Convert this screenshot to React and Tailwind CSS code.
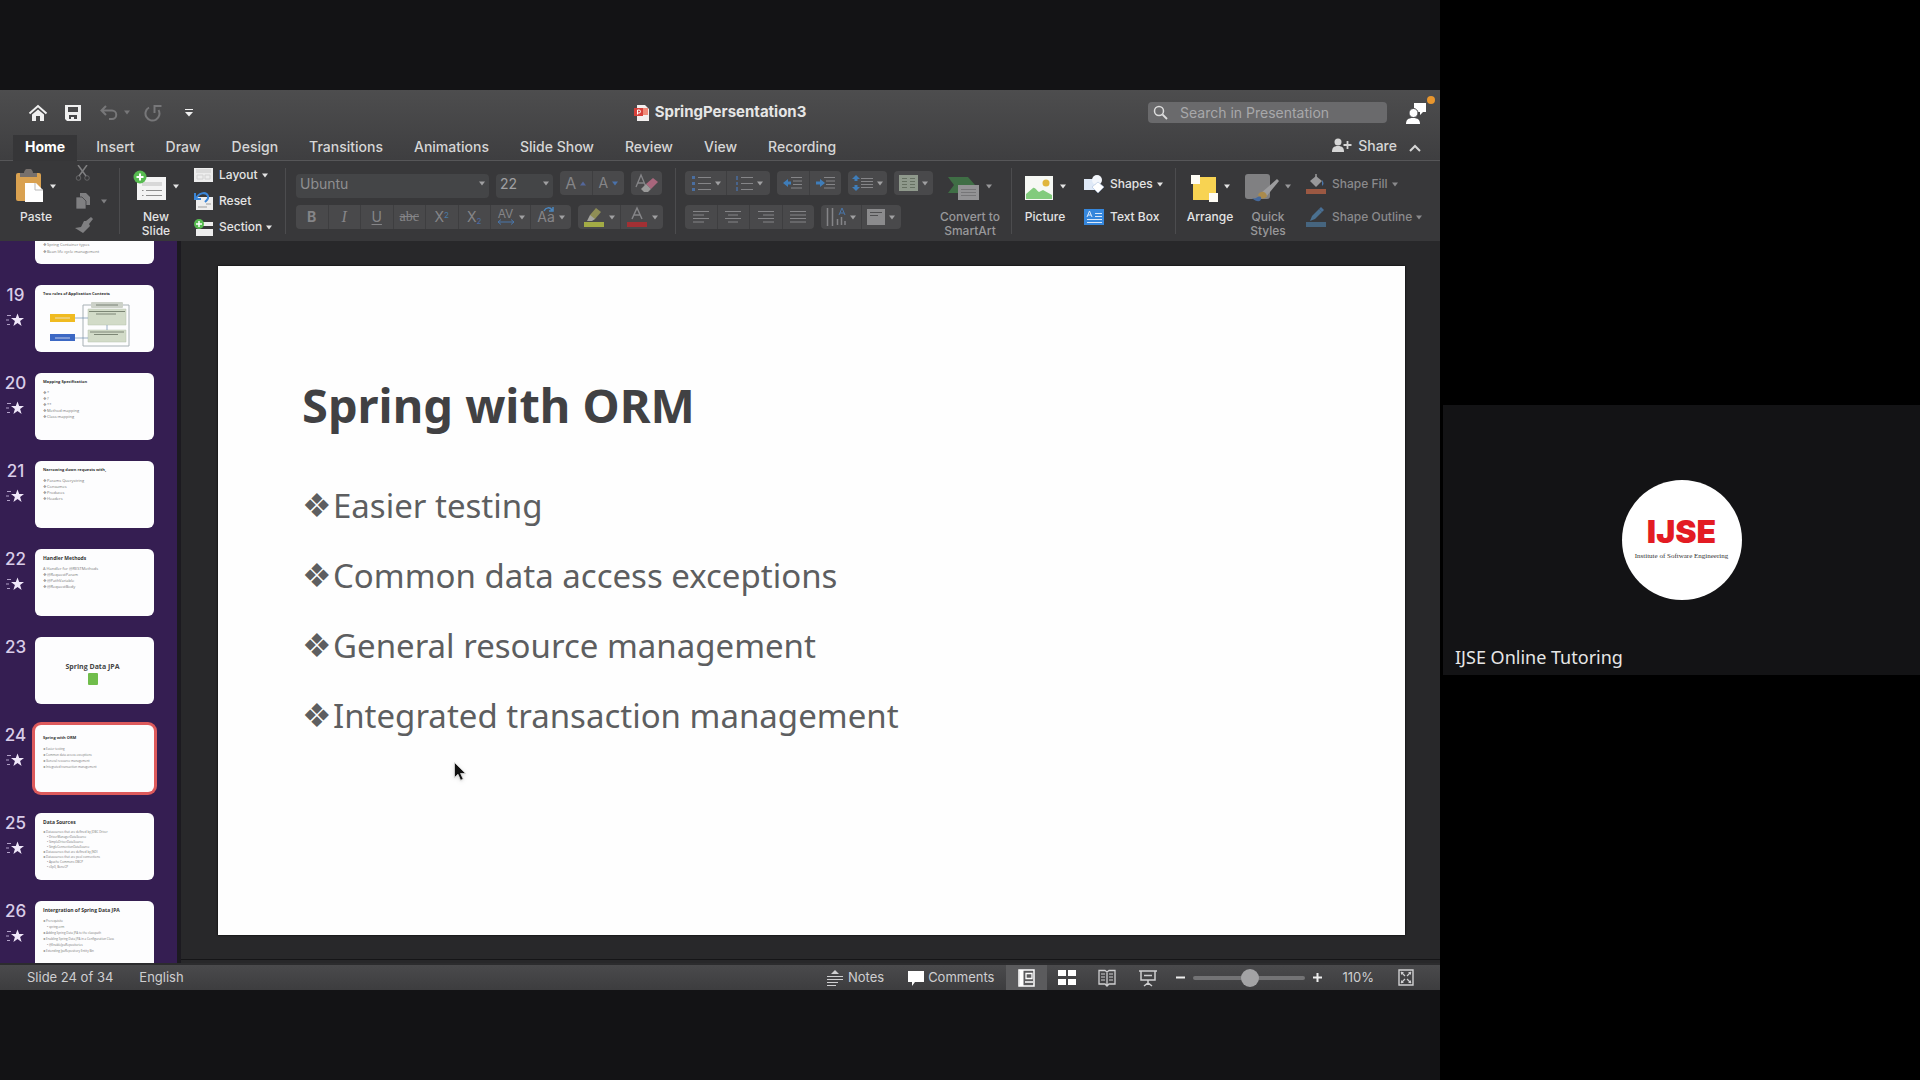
import React from "react";

const UI = "font-['Inter',sans-serif]";

function Caret({ className = "" }) {
  return (
    <svg viewBox="0 0 6 5" className={`h-[5px] w-1.5 shrink-0 ${className}`} fill="currentColor" aria-hidden="true">
      <path d="M0 .5h6L3 4.5z" />
    </svg>
  );
}

function Svg({ w, h, className = "", children }) {
  return (
    <svg width={w} height={h} viewBox={`0 0 ${w} ${h}`} className={`shrink-0 ${className}`} fill="none" aria-hidden="true">
      {children}
    </svg>
  );
}

/* ---------- title bar ---------- */

function TitleBar() {
  return (
    <header className="grid h-[45px] shrink-0 grid-cols-[1fr_auto_1fr] items-center">
      <div className="flex items-center pl-7 text-[#f0f0f0]">
        <button aria-label="Home" className="w-5">
          <Svg w={20} h={18}>
            <path d="M1.5 9.5 10 2l8.500 7.500" stroke="currentColor" strokeWidth="2" />
            <path d="M4 10.500 10 5.500l6 5V17h-4v-5H8v5H4z" fill="currentColor" />
          </Svg>
        </button>
        <button aria-label="Save" className="ml-4">
          <Svg w={18} h={18}>
            <path fillRule="evenodd" d="M1 1h16v16H3l-2-2zM4 3v5h10V3zM5 11v4h2v-2h3v2h3v-4z" fill="currentColor" />
          </Svg>
        </button>
        <button aria-label="Undo" className="ml-[18px] flex items-center gap-1.5 text-[#777779]">
          <Svg w={18} h={16}>
            <path d="M6 1 1.500 5.500 6 10M2 5.500h10a4.200 4.200 0 0 1 0 8.500H9" stroke="currentColor" strokeWidth="2" />
          </Svg>
          <Caret />
        </button>
        <button aria-label="Redo" className="ml-[14px] text-[#777779]">
          <Svg w={18} h={18}>
            <path d="M5 3.500A7 7 0 1 0 14.500 6M10.500 9V2h7" stroke="currentColor" strokeWidth="2" />
          </Svg>
        </button>
        <button aria-label="Customize toolbar" className="ml-[23px]">
          <Svg w={8} h={8}>
            <path d="M0 .5h8" stroke="currentColor" />
            <path d="M0 3h8L4 7.500z" fill="currentColor" />
          </Svg>
        </button>
      </div>
      <h1 className="flex items-center gap-[5px] text-[15px] font-bold text-[#e6e6e6]">
        <Svg w={16} h={18}>
          <path d="M3 1h8l4 4v12H3z" fill="#f3efee" />
          <path d="M9 4h5v7H9z" fill="#ef8a78" />
          <path d="M0 4h9v8H0z" fill="#d6403a" />
          <path d="M3.500 10.500V6H5a1.500 1.500 0 0 1 0 3H3.500" stroke="#fff" />
        </Svg>
        SpringPersentation3
      </h1>
      <div className="relative flex items-center justify-end pr-[13px]">
        <label className="flex h-[21px] w-[239px] items-center gap-3 rounded-sm bg-[#6a6a6c] pl-[5px] text-[#dcdcdc]">
          <Svg w={15} h={15}>
            <circle cx="6" cy="6" r="4.500" stroke="currentColor" strokeWidth="1.500" />
            <path d="m9.500 9.500 4.500 4.500" stroke="currentColor" strokeWidth="1.800" />
          </Svg>
          <input
            aria-label="Search in Presentation"
            placeholder="Search in Presentation"
            className="w-full min-w-0 bg-transparent text-sm outline-none placeholder:text-[#a8a8aa]"
          />
        </label>
        <button aria-label="Account and feedback" className="ml-[19px] text-white">
          <Svg w={21} h={22}>
            <path d="M8 1h12v9h-3l-3 3v-3H8z" fill="currentColor" />
            <circle cx="7.500" cy="11" r="4.500" fill="currentColor" stroke="#454547" />
            <path d="M0 22c0-4 2-6 7-6s7 2 7 6z" fill="currentColor" />
          </Svg>
        </button>
        <span className="absolute right-[5px] top-[-6px] size-2 rounded-full bg-[#e8962e]" />
      </div>
    </header>
  );
}

/* ---------- tabs ---------- */

const TABS = ["Home", "Insert", "Draw", "Design", "Transitions", "Animations", "Slide Show", "Review", "View", "Recording"];

function Tabs() {
  return (
    <nav className="flex h-[26px] shrink-0 items-stretch border-b border-[#565658] pl-[13px] text-sm text-[#d6d6d6]">
      {TABS.map((t, i) => (
        <button
          key={t}
          className={i === 0 ? "mr-[7px] -mb-px bg-[#363638] px-3 pb-[3px] font-bold text-white" : "mr-[7px] px-3 pb-0.5 font-medium"}
        >
          {t}
        </button>
      ))}
      <button className="ml-auto flex items-center gap-1.5 pb-1 font-medium">
        <Svg w={20} h={15}>
          <circle cx="6" cy="4" r="3.500" fill="currentColor" />
          <path d="M0 14c0-4 1.500-6 6-6s6 2 6 6z" fill="currentColor" />
          <path d="M15.500 3v8M11.500 7h8" stroke="currentColor" strokeWidth="1.800" />
        </Svg>
        Share
      </button>
      <button aria-label="Collapse ribbon" className="mr-[19px] ml-3">
        <Svg w={12} h={8}>
          <path d="m1 7 5-5 5 5" stroke="currentColor" strokeWidth="2" />
        </Svg>
      </button>
    </nav>
  );
}

/* ---------- ribbon ---------- */

function Big({ icon, label, off, className = "" }) {
  return (
    <button className={`flex shrink-0 flex-col items-center pt-[7px] ${off ? "text-[#98989a]" : "text-[#e4e4e4]"} ${className}`}>
      <span className="flex h-9 items-center gap-1.5">
        {icon}
        <Caret />
      </span>
      <span className="mt-1.5 text-center text-xs leading-[14px] font-medium whitespace-nowrap">{label}</span>
    </button>
  );
}

function Small({ icon, label, caret, off, className = "" }) {
  return (
    <button className={`flex items-center gap-1.5 text-xs font-medium whitespace-nowrap ${off ? "text-[#8a8a8c]" : "text-[#e4e4e4]"} ${className}`}>
      {icon}
      <span className="flex items-center gap-1">
        {label}
        {caret && <Caret />}
      </span>
    </button>
  );
}

function Strip({ children, className = "" }) {
  return <div className={`flex h-6 shrink-0 divide-x divide-[#3e3e40] overflow-hidden rounded-sm bg-[#49494b] text-[#858588] ${className}`}>{children}</div>;
}

function Cell({ label, caret, children, className = "flex-1" }) {
  return (
    <button aria-label={label} className={`flex items-center justify-center gap-1 ${className}`}>
      {children}
      {caret && <Caret className="text-[#a0a0a2]" />}
    </button>
  );
}

const Divider = () => <div className="my-[7px] w-px shrink-0 bg-[#4c4c4e]" />;

function Lines({ rows }) {
  return (
    <Svg w={18} h={14}>
      {rows.map(([a, b], i) => (
        <path key={i} d={`M${a} ${1.5 + i * 3.5}H${b}`} stroke="currentColor" />
      ))}
    </Svg>
  );
}

function Ribbon() {
  return (
    <div className="flex h-20 shrink-0 bg-[#38383a]">
      <section aria-label="Clipboard" className="flex w-[119px] shrink-0 pl-[15px]">
        <Big
          className="w-[42px]"
          label="Paste"
          icon={
            <Svg w={28} h={34}>
              <rect x="0" y="4" width="25" height="28" rx="2" fill="#d9a150" />
              <path d="M4 8V4h4a4.500 4.500 0 0 1 9 0h4v4z" fill="#77706c" />
              <path d="M9 14h11l7 7v12H9z" fill="#fff" />
              <path d="M19 14v7h8" stroke="#b9b9b9" />
            </Svg>
          }
        />
        <div className="ml-[18px] flex flex-col gap-3 pt-1 text-[#7f7f81]">
          <button aria-label="Cut">
            <Svg w={16} h={16}>
              <path d="m3 0 8 11M12 0 4 11" stroke="currentColor" strokeWidth="1.500" />
              <circle cx="3.500" cy="13" r="2.300" stroke="currentColor" opacity=".6" />
              <circle cx="12" cy="13" r="2.300" stroke="currentColor" opacity=".6" />
            </Svg>
          </button>
          <button aria-label="Copy" className="flex items-center gap-2.5">
            <Svg w={16} h={16}>
              <path d="M5 0h6l4 4v8H5z" fill="currentColor" />
              <path d="M1 4h6l4 4v8H1z" fill="currentColor" stroke="#38383a" strokeWidth=".7" />
            </Svg>
            <Caret />
          </button>
          <button aria-label="Format painter" className="-mt-1">
            <Svg w={18} h={16}>
              <path d="m11 4 5-4 2 2-4 5 1 2-7 7-8-5 6-1 3-6z" fill="currentColor" />
            </Svg>
          </button>
        </div>
      </section>
      <Divider />
      <section aria-label="Slides" className="flex w-[165px] shrink-0 pl-3">
        <Big
          className="w-12"
          label={<>New<br />Slide</>}
          icon={
            <Svg w={34} h={32}>
              <rect x="4" y="7" width="29" height="23" fill="#f4f4f4" />
              <path d="M9 12h20v4H9z" fill="#d8d8d8" />
              <path d="M13 20.500h16M13 25.500h16M9 20.500h1.500M9 25.500h1.500" stroke="#8d8d8d" />
              <circle cx="7" cy="7" r="6.500" fill="#57bb50" />
              <path d="M7 3.500v7M3.500 7h7" stroke="#fff" strokeWidth="2" />
            </Svg>
          }
        />
        <div className="ml-[14px] flex flex-col pt-px">
          <Small
            className="h-[26px]"
            label="Layout"
            caret
            icon={
              <Svg w={19} h={16}>
                <path d="M0 1h19v14H0z" fill="#ededed" />
                <path d="M2 3h15M2 5h15" stroke="#c9c9c9" />
                <path d="M3 8h6v4H3zM11 8h5v4h-5z" stroke="#d2d2d2" />
              </Svg>
            }
          />
          <Small
            className="h-[26px]"
            label="Reset"
            icon={
              <Svg w={19} h={20}>
                <path d="M2 6h17v13H2z" fill="#ededed" />
                <path d="M12 13h5M4 16h9" stroke="#9d9d9d" />
                <path d="M1 2v6h6M2 8c2-6 10-8 12-3 1 3-1 4-3 6" stroke="#3b86d8" strokeWidth="2" />
              </Svg>
            }
          />
          <Small
            className="h-[26px]"
            label="Section"
            caret
            icon={
              <Svg w={19} h={19}>
                <path d="M2 4h17v4H2zM2 11h17v7H2z" fill="#ededed" />
                <circle cx="5" cy="6" r="5" fill="#57bb50" />
                <path d="M5 3v6M2 6h6" stroke="#fff" strokeWidth="1.500" />
              </Svg>
            }
          />
        </div>
      </section>
      <Divider />
      <section aria-label="Font" className="flex w-[389px] shrink-0 flex-col gap-2.5 pt-2.5 pl-2.5">
        <div className="flex gap-[7px]">
          <div className="relative h-6 w-[193px]">
            <select aria-label="Font name" className="h-6 w-full appearance-none rounded-sm bg-[#444547] px-1 pb-1.5 text-sm text-[#8f8f91]">
              <option>Ubuntu</option>
            </select>
            <Caret className="absolute top-[10px] right-1 text-[#a0a0a2]" />
          </div>
          <div className="relative h-6 w-[57px]">
            <select aria-label="Font size" className="h-6 w-full appearance-none rounded-sm bg-[#444547] px-1 pb-1.5 text-sm text-[#a0a0a2]">
              <option>22</option>
            </select>
            <Caret className="absolute top-[10px] right-1 text-[#a0a0a2]" />
          </div>
          <Strip className="w-16">
            <Cell label="Increase font size">
              <span className="text-base leading-none">A</span>
              <svg viewBox="0 0 6 5" className="h-[5px] w-1.5 text-[#54679a]" fill="currentColor"><path d="M0 4.500h6L3 .5z" /></svg>
            </Cell>
            <Cell label="Decrease font size">
              <span className="text-sm leading-none">A</span>
              <Caret className="text-[#4a72ab]" />
            </Cell>
          </Strip>
          <Strip className="w-[31px]">
            <Cell label="Clear formatting">
              <Svg w={24} h={20}>
                <path d="m1 14 5-12 5 12M3 10h6" stroke="currentColor" strokeWidth="1.300" />
                <path d="m11 11 7-6 5 4-7 7z" fill="#a8667c" />
                <path d="m11 11 5 5-3 3H9l-3-3z" fill="#9a9a9a" />
              </Svg>
            </Cell>
          </Strip>
        </div>
        <div className="flex gap-[7px]">
          <Strip className="w-[275px] text-sm">
            <Cell label="Bold"><b>B</b></Cell>
            <Cell label="Italic"><i className="font-['Liberation_Serif',serif] text-base">I</i></Cell>
            <Cell label="Underline"><u className="underline-offset-2">U</u></Cell>
            <Cell label="Strikethrough"><s className="font-['Liberation_Serif',serif]">abc</s></Cell>
            <Cell label="Superscript"><span>X<sup className="text-[8px] text-[#4a7ba6]">2</sup></span></Cell>
            <Cell label="Subscript"><span>X<sub className="text-[8px] text-[#4a6aa6]">2</sub></span></Cell>
            <Cell label="Character spacing" caret className="w-10">
              <span className="flex flex-col items-center text-xs leading-[10px]">
                AV
                <Svg w={18} h={6}><path d="M1 3h16M4 .5 1 3l3 2.500M14 .5 17 3l-3 2.500" stroke="#4a76aa" /></Svg>
              </span>
            </Cell>
            <Cell label="Change case" caret className="w-10">
              <span className="relative">
                Aa
                <svg viewBox="0 0 12 6" className="absolute top-0 right-0 h-1.5 w-3" fill="none"><path d="M1 4c2-4 6-4 8-1M10 0v4H6" stroke="#4a86c0" strokeWidth="1.500" /></svg>
              </span>
            </Cell>
          </Strip>
          <Strip className="w-[85px]">
            <Cell label="Highlight color" caret>
              <Svg w={22} h={22}>
                <path d="m7 9 6-7 5 4-6 7-5 1z" fill="#8f8e55" />
                <path d="m7 9 5 4-3 2H4z" fill="#a5a5a0" />
                <path d="M1 16h20v5H1z" fill="#a3ab45" />
              </Svg>
            </Cell>
            <Cell label="Font color" caret>
              <Svg w={22} h={22}>
                <path d="m6 13 5-11 5 11M8 9h6" stroke="currentColor" strokeWidth="1.500" />
                <path d="M1 16h20v5H1z" fill="#a23034" />
              </Svg>
            </Cell>
          </Strip>
        </div>
      </section>
      <Divider />
      <section aria-label="Paragraph" className="flex w-[335px] shrink-0 pl-[9px]">
        <div className="flex w-[255px] flex-col gap-2.5 pt-2.5">
          <div className="flex gap-[7px]">
            <Strip className="w-[85px]">
              <Cell label="Bullets" caret className="w-[42px]">
                <Svg w={20} h={16}>
                  <path d="M7 2.500h13M7 8.500h13M7 14.500h13" stroke="currentColor" />
                  <path d="M1 2.500h3M1 8.500h3M1 14.500h3" stroke="#4a6ea0" strokeWidth="3" />
                </Svg>
              </Cell>
              <Cell label="Numbering" caret>
                <Svg w={18} h={16}>
                  <path d="M6 2.500h12M6 8.500h12M6 14.500h12" stroke="currentColor" />
                  <path d="M2 1v4M2 7v3M2 12v4" stroke="#4a6ea0" strokeWidth="1.500" />
                </Svg>
              </Cell>
            </Strip>
            <Strip className="w-16">
              <Cell label="Decrease indent">
                <Svg w={19} h={14}>
                  <path d="M8 1.500h11M10 5h9M10 8.500h9M8 12h11" stroke="currentColor" />
                  <path d="m0 7 5-4v2.500h3v3H5V11z" fill="#3f7db9" />
                </Svg>
              </Cell>
              <Cell label="Increase indent">
                <Svg w={19} h={14}>
                  <path d="M8 1.500h11M10 5h9M10 8.500h9M8 12h11" stroke="currentColor" />
                  <path d="m9 7-5-4v2.500H0v3h4V11z" fill="#3f7db9" />
                </Svg>
              </Cell>
            </Strip>
            <Strip className="w-[39px]">
              <Cell label="Line spacing" caret>
                <Svg w={21} h={18}>
                  <path d="M9 4.500h12M9 7.500h12M9 10.500h12M9 13.500h12" stroke="currentColor" />
                  <path d="m4 1 4 4H5.500v2h-3V5H0zM4 17l4-4H5.500v-2h-3v2H0z" fill="#3f7db9" />
                </Svg>
              </Cell>
            </Strip>
            <Strip className="w-[39px]">
              <Cell label="Columns" caret>
                <Svg w={19} h={16}>
                  <path d="M0 0h19v16H0z" fill="#8f998c" />
                  <path d="M3 3.500h5M3 6.500h5M3 9.500h5M3 12.500h5M11 3.500h5M11 6.500h5M11 9.500h5M11 12.500h5" stroke="#667062" />
                </Svg>
              </Cell>
            </Strip>
          </div>
          <div className="flex gap-[7px]">
            <Strip className="w-[129px]">
              <Cell label="Align left"><Lines rows={[[1, 17], [1, 12], [1, 17], [1, 12]]} /></Cell>
              <Cell label="Center"><Lines rows={[[1, 17], [4, 14], [1, 17], [4, 14]]} /></Cell>
              <Cell label="Align right"><Lines rows={[[1, 17], [6, 17], [1, 17], [6, 17]]} /></Cell>
              <Cell label="Justify"><Lines rows={[[1, 17], [1, 17], [1, 17], [1, 17]]} /></Cell>
            </Strip>
            <Strip className="w-20">
              <Cell label="Text direction" caret>
                <Svg w={20} h={20}>
                  <path d="M1.500 1v18M6.500 1v18M11.500 12v6M15.500 10v8M19 14v4" stroke="currentColor" strokeWidth="1.500" />
                  <path d="m13 8 3-7 3 7M14 6h4" stroke="#4a76aa" />
                </Svg>
              </Cell>
              <Cell label="Align text" caret>
                <Svg w={18} h={16}>
                  <path d="M0 0h18v16H0z" fill="#8b8b8d" />
                  <path d="M3 3.500h12M3 6.500h8" stroke="#4f4f51" />
                </Svg>
              </Cell>
            </Strip>
          </div>
        </div>
        <Big
          off
          className="w-[60px]"
          label={<>Convert to<br />SmartArt</>}
          icon={
            <Svg w={32} h={26} className="mt-1">
              <path d="M0 2h20l7 8-7 8H0l6-8z" fill="#3f6e45" />
              <path d="M10 10h21v15H10z" fill="#939395" />
              <path d="M13 14.500h15M13 17.500h15M13 20.500h15" stroke="#767678" />
            </Svg>
          }
        />
      </section>
      <Divider />
      <section aria-label="Insert" className="flex w-[163px] shrink-0 pl-[13px]">
        <Big
          className="w-10"
          label="Picture"
          icon={
            <Svg w={30} h={26} className="mt-1">
              <path d="M1 1h28v24H1z" fill="#f6f8f4" />
              <circle cx="22" cy="8" r="3.500" fill="#e0b53c" />
              <path d="M2 24v-5l7-6c2-1 4 3 6 4l4-2 9 5v4z" fill="#82cb7c" />
            </Svg>
          }
        />
        <div className="ml-[19px] flex flex-col gap-[9px] pt-[11px]">
          <Small
            className="h-6"
            label="Shapes"
            caret
            icon={
              <Svg w={20} h={20}>
                <path d="M0 5h11v11H0z" fill="#dfe9f7" />
                <circle cx="13" cy="6" r="5" fill="#f3f6fb" />
                <path d="m14 8 6 5-6 6-6-6z" fill="#fff" stroke="#9eb7d8" strokeWidth=".5" />
              </Svg>
            }
          />
          <Small
            className="h-6"
            label="Text Box"
            icon={
              <Svg w={20} h={18}>
                <path d="M0 1h20v16H0z" fill="#3687dc" />
                <path d="m3 9 2.500-6L8 9M4 7h3M11 5.500h7M11 8.500h7M3 11.500h15M3 14.500h15" stroke="#dbe9fa" />
              </Svg>
            }
          />
        </div>
      </section>
      <Divider />
      <section aria-label="Format" className="flex flex-1 pl-[14px]">
        <Big
          className="w-10"
          label="Arrange"
          icon={
            <Svg w={28} h={28} className="mt-1">
              <path d="M3 3h23v23H3z" fill="#f8d352" />
              <path d="M1 1h9v9H1zM19 19h9v9h-9z" fill="#fffdf5" />
            </Svg>
          }
        />
        <Big
          off
          className="ml-4 w-11"
          label={<>Quick<br />Styles</>}
          icon={
            <Svg w={34} h={30} className="mt-1">
              <rect y="1" width="25" height="25" rx="3" fill="#808082" />
              <path d="m16 20 16-14 2 2-13 16z" fill="#9c9c9e" />
              <path d="M13 22c2-5 8-4 9 1-2 3-6 4-9-1z" fill="#a98a4c" />
              <path d="M7 25c4 2 6-3 9-1 1 5-4 6-9 1z" fill="#45689a" />
            </Svg>
          }
        />
        <div className="ml-4 flex flex-col gap-[9px] pt-[11px]">
          <Small
            off
            caret
            className="h-6"
            label="Shape Fill"
            icon={
              <Svg w={20} h={20}>
                <path d="m4 7 6-5 6 5-6 6z" fill="#98989a" />
                <path d="M10 0v6" stroke="#98989a" strokeWidth="1.500" />
                <path d="M16 6c2 3 2 4 0 6z" fill="#4a76aa" />
                <path d="M0 15h20v5H0z" fill="#9b5842" />
              </Svg>
            }
          />
          <Small
            off
            caret
            className="h-6"
            label="Shape Outline"
            icon={
              <Svg w={20} h={20}>
                <path d="m4 14 2-5 7-7 3 3-7 7z" fill="#4b7190" />
                <path d="m13 2 2-2 3 3-2 2z" fill="#486f96" />
                <path d="M0 15h20v5H0z" fill="#46657f" />
              </Svg>
            }
          />
        </div>
      </section>
    </div>
  );
}

/* ---------- thumbnails ---------- */

const SLIDES = [
  { n: 19, anim: true, kind: "diagram", title: "Two roles of Application Contexts" },
  { n: 20, anim: true, title: "Mapping Specification", lines: [["❖*"], ["❖?"], ["❖**"], ["❖Method mapping"], ["❖Class mapping"]] },
  { n: 21, anim: true, title: "Narrowing down requests with,", lines: [["❖Params Querystring"], ["❖Consumes"], ["❖Produces"], ["❖Headers"]] },
  { n: 22, anim: true, title: "Handler Methods", lines: [["A Handler for @RESTMethods"], ["❖@RequestParam"], ["❖@PathVariable"], ["❖@RequestBody"]] },
  { n: 23, kind: "cover", title: "Spring Data JPA" },
  { n: 24, anim: true, active: true, title: "Spring with ORM", lines: [["❖Easier testing"], ["❖Common data access exceptions"], ["❖General resource management"], ["❖Integrated transaction management"]] },
  { n: 25, anim: true, title: "Data Sources", lines: [["❖Datasources that are defined by JDBC Driver"], ["• DriverManagerDataSource", 1], ["• SimpleDriverDataSource", 1], ["• SingleConnectionDataSource", 1], ["❖Datasources that are defined by JNDI"], ["❖Datasources that are pool connections"], ["• Apache Commons DBCP", 1], ["• c3p0, BoneCP", 1]] },
  { n: 26, anim: true, title: "Intergration of Spring Data JPA", lines: [["❖Prerequisite"], ["• spring-orm", 1], ["❖Adding Spring Data JPA to the classpath"], ["❖Enabling Spring Data JPA in a Configuration Class"], ["• @EnableJpaRepositories", 1], ["❖Extending JpaRepository Entity Bin"]] },
];

function Diagram() {
  return (
    <Svg w={82} h={46} className="mt-1 ml-[7px]">
      <path d="M33 3h46v41H33z" stroke="#a7b0b5" />
      <rect x="41" y="0" width="32" height="6" rx="1" fill="#ccd1c8" />
      <path d="M38 7h38v16H38zM38 28h38v12H38z" fill="#d2dbc8" stroke="#b7c2ad" strokeWidth=".5" />
      <path d="M39 9.500h36M46 12h20M40 30h34M44 32.500h24M46 3h22" stroke="#66705f" strokeWidth=".8" />
      <path d="M57 23v5M25 16h13M25 36h13" stroke="#6d8db0" strokeWidth=".7" />
      <path d="M0 12h25v8H0z" fill="#f0bb21" />
      <path d="M0 32h25v7H0z" fill="#3c68c4" />
      <path d="M5 16h15M5 36h15" stroke="#e8e8f0" strokeWidth=".8" />
    </Svg>
  );
}

function thumbBox(s) {
  if (s.kind === "cover") return "flex flex-col items-center pt-6 pr-1";
  return s.active ? "block pt-[9px] pl-2 ring-3 ring-[#dd5a5c]" : "block pt-[5px] pl-2";
}

function Thumb({ s }) {
  const dense = s.lines && s.lines.length > 5;
  const leading = !dense || s.lines.length < 7 ? "leading-[6px]" : "leading-[5px]";
  return (
    <button className="flex w-full shrink-0 text-left">
      <span className="flex w-[35px] shrink-0 flex-col items-center pr-1 text-[17px] leading-5 font-medium text-[#d9cde8]">
        {s.n}
        {s.anim && (
          <Svg w={19} h={14} className="mt-2 mr-[2px]">
            <path d="M2 2.500h4M1 7h3M2 11.500h3" stroke="#b3a2c9" />
            <path d="m12.500.5 1.700 4.500h4.800l-3.900 3 1.500 5-4.100-3-4.100 3 1.500-5L6 5h4.800z" fill="#f0e8fa" />
          </Svg>
        )}
      </span>
      <span className={`h-[67px] w-[119px] shrink-0 overflow-hidden rounded-md bg-[#fdfdfe] font-['Open_Sans',sans-serif] text-[#777] ${thumbBox(s)}`}>
        {s.kind === "cover" ? (
          <>
            <span className="text-[7px] leading-3 font-bold text-[#444]">{s.title}</span>
            <span className="h-3 w-2.5 rounded-[1px] bg-[#70bd4b]" />
          </>
        ) : (
          <>
            <span className={`block leading-2 font-bold whitespace-nowrap text-[#333] ${s.n < 22 || s.active ? "text-[4px]" : "text-[5px]"}`}>{s.title}</span>
            {s.kind === "diagram" ? (
              <Diagram />
            ) : (
              <span className="mt-1 flex flex-col">
                {s.lines.map(([t, d], i) => (
                  <span key={i} className={`block whitespace-nowrap ${leading} ${dense || s.active ? "text-[3px]" : "text-[4px]"} ${d ? "pl-1" : ""}`}>
                    {t}
                  </span>
                ))}
              </span>
            )}
          </>
        )}
      </span>
    </button>
  );
}

/* ---------- slide ---------- */

const POINTS = ["Easier testing", "Common data access exceptions", "General resource management", "Integrated transaction management"];

function Slide() {
  return (
    <article className="relative flex-1 bg-[#fefefe] pt-[103px] pl-[84px] font-['Noto_Sans',sans-serif] shadow-[0_0_2px_#000]">
      <h2 className="text-[47px] leading-[72px] font-bold text-[#414143]">Spring with ORM</h2>
      <ul className="mt-[30px] text-[33px] leading-[70px] text-[#5d5e60]">
        {POINTS.map((p) => (
          <li key={p} className="flex whitespace-nowrap">
            <span className="w-[31px] font-['DejaVu_Sans',sans-serif]">❖</span>
            {p}
          </li>
        ))}
      </ul>
      <svg viewBox="0 0 14 20" className="absolute top-[496px] left-[236px] h-5 w-3.5 drop-shadow" aria-hidden="true">
        <path d="M.5.500v15l3.500-3.200 2.600 6 2.600-1.200-2.600-5.600h5z" fill="#111" stroke="#ddd" strokeWidth=".8" />
      </svg>
    </article>
  );
}

/* ---------- status bar ---------- */

function StatusBar() {
  return (
    <footer className="flex h-[27px] shrink-0 items-center border-t-2 border-[#2c2c2e] bg-linear-to-b from-[#4a4a4c] to-[#3d3d3f] text-[13px] text-[#cfcfd1]">
      <span className="ml-[27px]">Slide 24 of 34</span>
      <button className="ml-[26px]">English</button>
      <button className="ml-auto flex items-center gap-[5px]">
        <Svg w={16} h={17}>
          <path d="m4 5 4-4 4 4z" fill="currentColor" />
          <path d="M0 7.500h16M0 10.500h16M0 13.500h11M0 16.500h9" stroke="currentColor" />
        </Svg>
        Notes
      </button>
      <button className="ml-6 flex items-center gap-1">
        <Svg w={16} h={16} className="text-white">
          <path d="M0 1h16v11H7l-3 4v-4H0z" fill="currentColor" />
        </Svg>
        Comments
      </button>
      <button aria-label="Normal view" className="ml-3 flex h-full w-[41px] items-center justify-center bg-[#5b5b5d] text-white">
        <Svg w={17} h={18}>
          <path d="M1 1h15v16H1z" stroke="currentColor" strokeWidth="1.500" />
          <path d="M3.500 1v16" stroke="currentColor" strokeWidth="4" />
          <path d="M8 4.500h6v5H8zM7 13h8" stroke="currentColor" strokeWidth="1.300" />
        </Svg>
      </button>
      <button aria-label="Slide sorter" className="ml-[11px] text-white">
        <Svg w={18} h={15}>
          <path d="M0 0h8v6H0zM10 0h8v6h-8zM0 9h8v6H0zM10 9h8v6h-8z" fill="currentColor" />
        </Svg>
      </button>
      <button aria-label="Reading view" className="ml-[22px]">
        <Svg w={18} h={18}>
          <path d="M1 1.500h6l2 1.500 2-1.500h6V15h-6l-2 2-2-2H1zM9 3v13" stroke="currentColor" strokeWidth="1.300" />
          <path d="M3 5h4M3 8h4M3 11h4M11 5h4M11 8h4M11 11h4" stroke="currentColor" />
        </Svg>
      </button>
      <button aria-label="Slide show" className="ml-[23px]">
        <Svg w={18} h={18}>
          <path d="M0 2h18M2 2v9h14V2M9 11v5M5 17l4-3 4 3M5 6.500h8" stroke="currentColor" strokeWidth="1.500" />
        </Svg>
      </button>
      <button aria-label="Zoom out" className="ml-[19px]">
        <Svg w={9} h={9}><path d="M0 4.500h9" stroke="#eee" strokeWidth="2" /></Svg>
      </button>
      <input
        type="range"
        aria-label="Zoom"
        min="0"
        max="100"
        defaultValue="51"
        className="mx-2 w-28 appearance-none bg-transparent [&::-webkit-slider-runnable-track]:h-1 [&::-webkit-slider-runnable-track]:rounded-full [&::-webkit-slider-runnable-track]:bg-[#737375] [&::-webkit-slider-thumb]:-mt-[7px] [&::-webkit-slider-thumb]:size-[18px] [&::-webkit-slider-thumb]:appearance-none [&::-webkit-slider-thumb]:rounded-full [&::-webkit-slider-thumb]:bg-[#a3a3a5]"
      />
      <button aria-label="Zoom in">
        <Svg w={9} h={9}><path d="M0 4.500h9M4.500 0v9" stroke="#eee" strokeWidth="2" /></Svg>
      </button>
      <button className="ml-5">110%</button>
      <button aria-label="Fit to window" className="mr-[26px] ml-6">
        <Svg w={16} h={17}>
          <path d="M1 1h14v15H1z" stroke="currentColor" strokeWidth="1.400" />
          <path d="m3 3 4 4M13 3 9 7M3 14l4-4M13 14l-4-4" stroke="currentColor" strokeWidth="1.200" />
          <path d="M3 3h3L3 6zM13 3v3l-3-3zM3 14v-3l3 3zM13 14h-3l3-3z" fill="currentColor" />
        </Svg>
      </button>
    </footer>
  );
}

/* ---------- call participant ---------- */

function Participant() {
  return (
    <div className="relative ml-[3px] flex aspect-[53/30] items-center justify-center bg-[#131315]">
      <div className="flex size-30 flex-col items-center justify-center rounded-full bg-white pb-2">
        <span className="font-['Inter',sans-serif] text-[32px] leading-10 font-black text-[#e31b23]">IJSE</span>
        <span className="font-['Liberation_Serif',serif] text-[7px] leading-2 whitespace-nowrap text-[#333]">Institute of Software Engineering</span>
      </div>
      <span className="absolute bottom-1 left-3 font-['Noto_Sans',sans-serif] text-lg leading-7 text-[#e6e6e6]">IJSE Online Tutoring</span>
    </div>
  );
}

export default function App() {
  return (
    <div className={`flex min-h-screen bg-black ${UI}`}>
      <main className="flex min-w-0 flex-[3] flex-col justify-center bg-[#131315]">
        <div className="flex aspect-[8/5] flex-col overflow-hidden bg-[#28282a]">
          <div className="bg-linear-to-b from-[#4d4d4e] to-[#3e3e40]">
            <TitleBar />
            <Tabs />
          </div>
          <Ribbon />
          <div className="flex min-h-0 flex-1">
            <aside className="flex w-[181px] shrink-0 flex-col gap-[21px] overflow-hidden border-r-4 border-[#1c1a20] bg-[#351e52]">
              <div className="ml-[35px] h-[23px] w-[119px] shrink-0 rounded-b-md bg-[#fdfdfe] pl-2 font-['Open_Sans',sans-serif] text-[4px] leading-[7px] whitespace-nowrap text-[#777]">
                <div>❖Spring Container types</div>
                <div>❖Bean life cycle management</div>
              </div>
              {SLIDES.map((s) => (
                <Thumb key={s.n} s={s} />
              ))}
            </aside>
            <div className="flex min-w-0 flex-1 flex-col">
              <div className="flex flex-1 border-b border-[#151517] pt-[25px] pr-[35px] pb-6 pl-[37px]">
                <Slide />
              </div>
              <div className="h-[3px] shrink-0" />
            </div>
          </div>
          <StatusBar />
        </div>
      </main>
      <aside className="flex flex-1 flex-col justify-center">
        <Participant />
      </aside>
    </div>
  );
}
